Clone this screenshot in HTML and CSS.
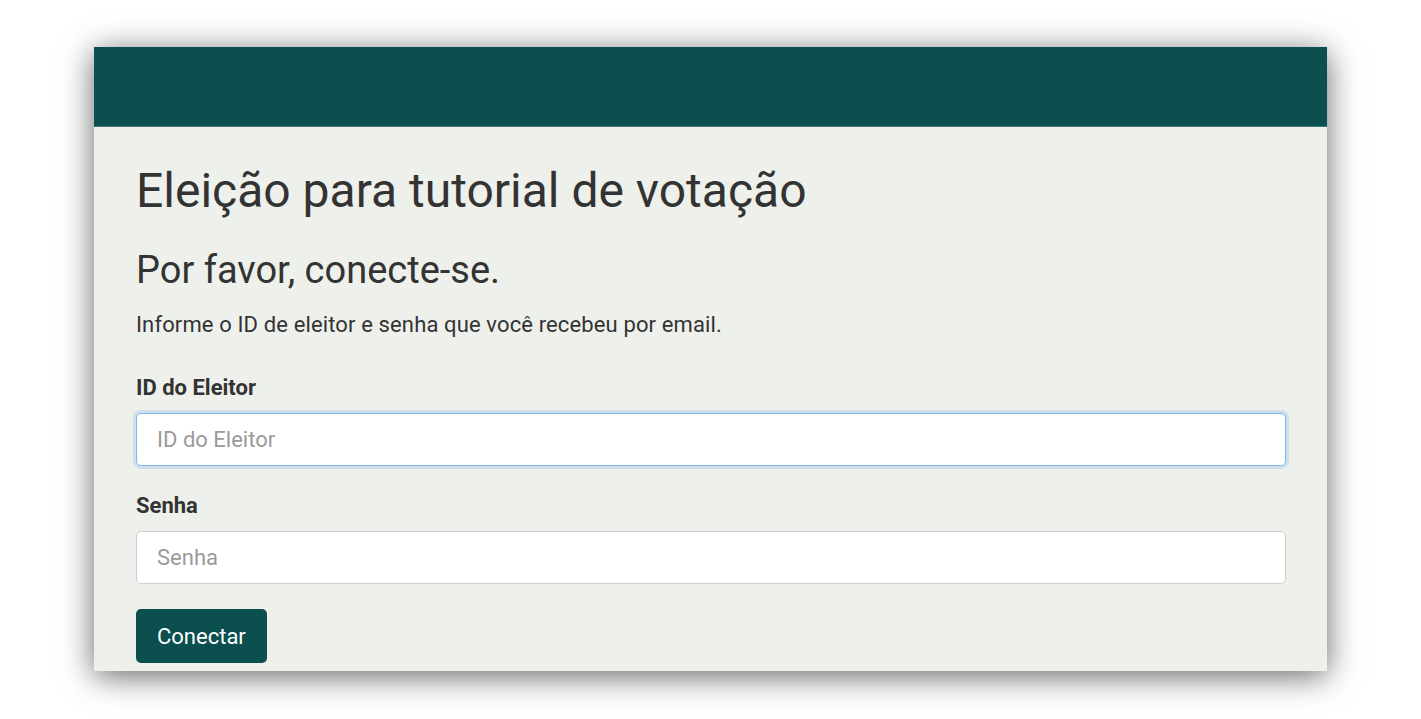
FILE: index.html
```html
<!DOCTYPE html>
<html lang="pt-BR">
<head>
    <meta charset="UTF-8">
    <meta name="viewport" content="width=device-width, initial-scale=1.0">
    <title>Eleição para tutorial de votação</title>
    <link rel="stylesheet" href="styles.css">
</head>
<body>
    <div class="window">
        <header class="topbar"></header>

        <main class="content">
            <h1>Eleição para tutorial de votação</h1>
            <h2>Por favor, conecte-se.</h2>
            <p class="hint">Informe o ID de eleitor e senha que você recebeu por email.</p>

            <form class="login-form">
                <div class="field">
                    <label for="voterId">ID do Eleitor</label>
                    <input type="text" id="voterId" class="focused" placeholder="ID do Eleitor">
                </div>
                <div class="field">
                    <label for="password">Senha</label>
                    <input type="password" id="password" placeholder="Senha">
                </div>
                <button type="submit" class="btn">Conectar</button>
            </form>
        </main>
    </div>
</body>
</html>
```

FILE: styles.css
```css
:root {
    --primary: #0b4f4e;
    --bg: #eef0ec;
    --text: #333333;
    --border: #cfcfcf;
}

* {
    box-sizing: border-box;
    margin: 0;
    padding: 0;
}

html,
body {
    height: 100%;
    overflow: hidden;
}

body {
    font-family: Roboto, 'Liberation Sans', sans-serif;
    background: #ffffff;
    color: var(--text);
}

.window {
    width: 1233px;
    height: 624px;
    margin: 47px auto 0;
    background: var(--bg);
    box-shadow: 0 5px 30px rgba(0, 0, 0, 0.6);
    overflow: hidden;
}

.topbar {
    height: 80px;
    background: var(--primary);
    border-bottom: 1px solid #3f7a78;
}

.content {
    padding: 35px 41px 0 42px;
}

h1 {
    font-size: 48px;
    font-weight: 400;
    line-height: 1.2;
    margin-bottom: 28px;
}

h2 {
    font-size: 38px;
    font-weight: 400;
    line-height: 1.2;
    margin-bottom: 15px;
}

.hint {
    font-size: 22px;
    line-height: 1.5;
    letter-spacing: 0.13px;
    margin-bottom: 30px;
}

.field {
    margin-bottom: 23px;
}

.field + .field {
    margin-bottom: 25px;
}

label {
    display: block;
    font-size: 22px;
    font-weight: 700;
    line-height: 1.5;
    margin-bottom: 9px;
}

input {
    display: block;
    width: 100%;
    height: 53px;
    padding: 0 20px;
    font-family: inherit;
    font-size: 22px;
    color: var(--text);
    background: #ffffff;
    border: 1px solid var(--border);
    border-radius: 5px;
    outline: none;
}

input::placeholder {
    color: #9a9a9a;
}

input.focused,
input:focus {
    border-color: #7db6ee;
    box-shadow: 0 0 0 3px rgba(100, 170, 240, 0.22);
}

.btn {
    display: inline-block;
    height: 54px;
    padding: 0 21px;
    font-family: inherit;
    font-size: 22px;
    color: #ffffff;
    background: var(--primary);
    border: none;
    border-radius: 5px;
    cursor: pointer;
}
```
